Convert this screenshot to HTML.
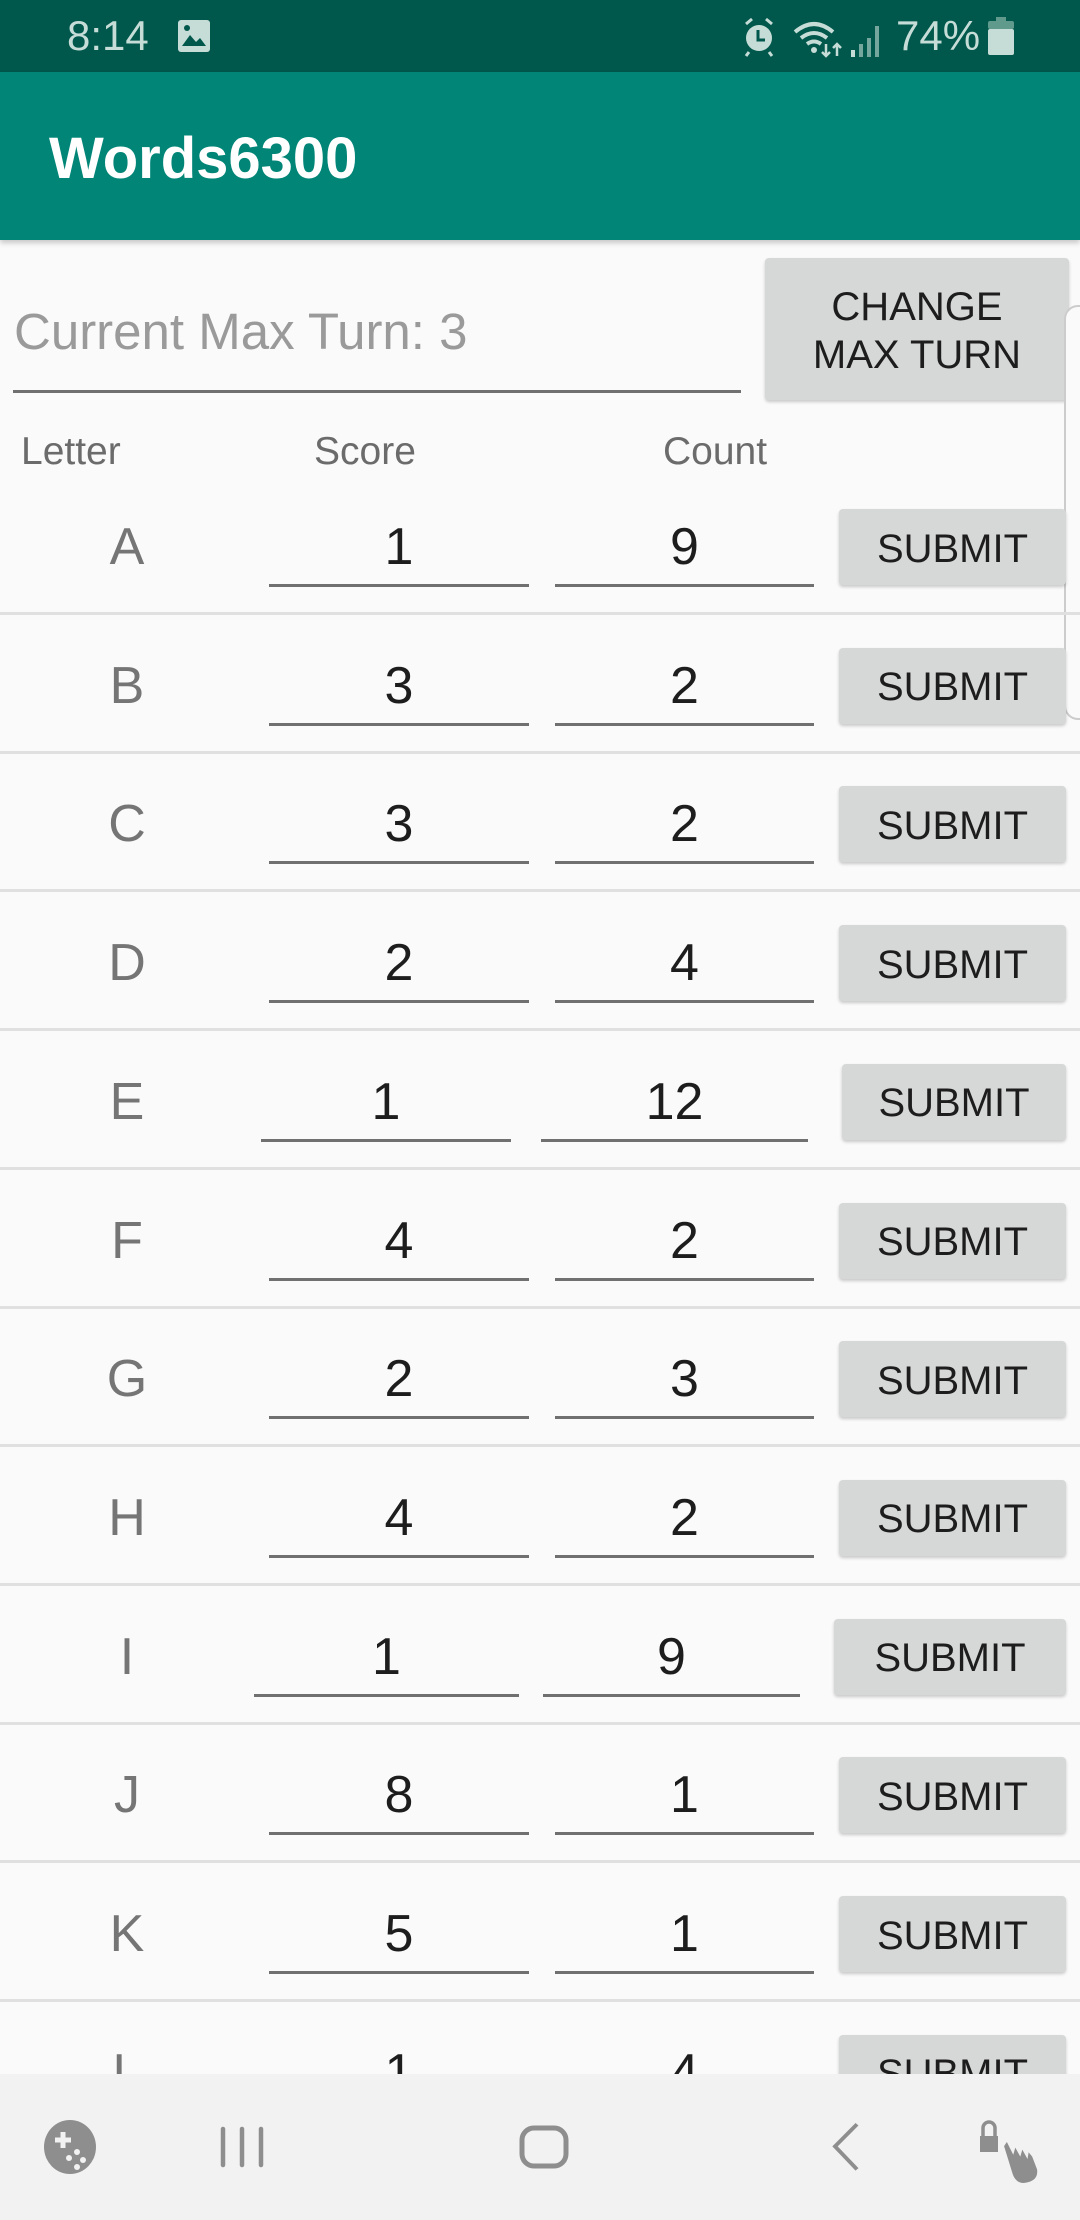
<!DOCTYPE html>
<html><head><meta charset="utf-8"><style>
*{margin:0;padding:0;box-sizing:border-box}
body{width:1080px;height:2220px;overflow:hidden;background:#fafafa;font-family:"Liberation Sans",Arial,sans-serif;position:relative}
.a{position:absolute}
.sb{left:0;top:0;width:1080px;height:72px;background:#00574b}
.ab{left:0;top:72px;width:1080px;height:168px;background:#008577;box-shadow:0 3px 5px rgba(0,0,0,.2)}
.btn{background:#d6d7d7;border-radius:4px;box-shadow:0 2px 3px rgba(0,0,0,.2);color:#1d1d1d;text-align:center;font-size:40px;display:flex;align-items:center;justify-content:center}
.ul{height:3px;background:#707070}
.num{font-size:52px;color:#1d1d1d;text-align:center}
.let{font-size:52px;color:#757575;text-align:center;width:120px}
.sep{left:0;width:1080px;height:3px;background:#e0e0e0}
.hd{font-size:39px;color:#6b6b6b;top:430px}
</style></head><body>
<div class="a sb"></div>
<div class="a" style="left:67px;top:12px;font-size:42px;color:#c5dcd7">8:14</div>
<svg class="a" style="left:176px;top:18px" width="36" height="36" viewBox="0 0 36 36"><rect x="2" y="2" width="32" height="32" rx="3" fill="#c5dcd7"/><path d="M6 28 L14 17 L20 24 L24 20 L30 28Z" fill="#00574b"/><circle cx="11" cy="10" r="3" fill="#00574b"/></svg>
<svg class="a" style="left:738px;top:14px" width="280" height="44" viewBox="0 0 280 44">
<g fill="#c5dcd7" stroke="#c5dcd7">
<circle cx="21" cy="24" r="13" stroke="none"/><path d="M8 10 L14 5 M34 10 L28 5 M11 38 L8 42 M31 38 L34 42" stroke-width="3" fill="none"/>
<path d="M20 16 V26 H27" stroke="#00574b" stroke-width="3" fill="none"/>
<path d="M57 18 Q76 2 95 18 M63 24 Q76 14 89 24 M69 30 Q76 25 83 30" stroke-width="4" fill="none"/>
<circle cx="76" cy="36" r="3" stroke="none"/>
<path d="M88 30 V42 M84 38 L88 42 L92 38 M99 42 V30 M95 34 L99 30 L103 34" stroke-width="2.5" fill="none"/>
<rect x="113" y="36" width="4" height="7" stroke="none"/><rect x="121" y="30" width="4" height="13" stroke="none" opacity=".6"/><rect x="129" y="24" width="4" height="19" stroke="none" opacity=".6"/><rect x="137" y="12" width="4" height="31" stroke="none" opacity=".6"/>
</g></svg>
<div class="a" style="left:896px;top:12px;font-size:42px;color:#c5dcd7">74%</div>
<svg class="a" style="left:988px;top:17px" width="26" height="38" viewBox="0 0 26 38"><rect x="8" y="0" width="10" height="6" fill="#5f9a8d"/><rect x="0" y="4" width="26" height="8" rx="2" fill="#5f9a8d"/><rect x="0" y="12" width="26" height="26" rx="2" fill="#c5dcd7"/></svg>
<div class="a ab"></div>
<div class="a" style="left:49px;top:125px;font-size:58px;font-weight:bold;color:#fff">Words6300</div>

<div class="a" style="left:14px;top:302px;font-size:51px;color:#9a9a9a">Current Max Turn: 3</div>
<div class="a ul" style="left:13px;top:390px;width:728px"></div>
<div class="a btn" style="left:765px;top:258px;width:304px;height:142px;line-height:48px;padding-top:4px">CHANGE<br>MAX TURN</div>
<div class="a" style="left:1064px;top:305px;width:30px;height:415px;border:2px solid #ccc;border-radius:14px;background:#fafafa"></div>

<div class="a hd" style="left:21px">Letter</div>
<div class="a hd" style="left:314px">Score</div>
<div class="a hd" style="left:663px">Count</div>

<div id="rows"></div>
<script>
var L="ABCDEFGHIJKL",S=[1,3,3,2,1,4,2,4,1,8,5,1],C=[9,2,2,4,12,2,3,2,9,1,1,4];
var off={4:[-8,-18,-14,-6,3],8:[-15,-10,-12,-14,-5]};
var h="";
for(var i=0;i<12;i++){
 var c=546+i*138.7,o=off[i]||[0,0,0,0,0];
 var s1=269+o[0],s2=529+o[1],c1=555+o[2],c2=814+o[3],b1=839+o[4];
 h+='<div class="a let" style="left:67px;top:'+(c-29)+'px">'+L[i]+'</div>';
 h+='<div class="a num" style="left:'+s1+'px;width:'+(s2-s1)+'px;top:'+(c-29)+'px">'+S[i]+'</div>';
 h+='<div class="a ul" style="left:'+s1+'px;width:'+(s2-s1)+'px;top:'+(c+38)+'px"></div>';
 h+='<div class="a num" style="left:'+c1+'px;width:'+(c2-c1)+'px;top:'+(c-29)+'px">'+C[i]+'</div>';
 h+='<div class="a ul" style="left:'+c1+'px;width:'+(c2-c1)+'px;top:'+(c+38)+'px"></div>';
 h+='<div class="a btn" style="left:'+b1+'px;width:'+(1066-b1)+'px;top:'+(c-37)+'px;height:76px;padding-top:4px">SUBMIT</div>';
 h+='<div class="a sep" style="top:'+(c+66)+'px"></div>';
}
document.getElementById('rows').innerHTML=h;
</script>

<div class="a" style="left:0;top:2074px;width:1080px;height:146px;background:#f2f2f2"></div>
<svg class="a" style="left:0;top:2074px" width="1080" height="146" viewBox="0 0 1080 146">
<g fill="#8e8e8e" stroke="#8e8e8e">
<ellipse cx="70" cy="73" rx="26" ry="27" stroke="none"/>
<path d="M63 58 V74 M55 66 H71" stroke="#f2f2f2" stroke-width="5"/>
<circle cx="77" cy="78" r="3" fill="#f2f2f2" stroke="none"/><circle cx="69" cy="84" r="3" fill="#f2f2f2" stroke="none"/><circle cx="83" cy="86" r="3" fill="#f2f2f2" stroke="none"/><circle cx="77" cy="93" r="3" fill="#f2f2f2" stroke="none"/>
<path d="M223 55 V91 M242 55 V91 M261 55 V91" stroke-width="4.5" stroke-linecap="round"/>
<rect x="522" y="54" width="44" height="38" rx="12" fill="none" stroke-width="5"/>
<path d="M857 53 L835 77 L857 102" fill="none" stroke-width="4" transform="translate(0,-4) scale(1,0.92) translate(0,6)"/>
<rect x="980" y="62" width="18" height="16" stroke="none"/>
<path d="M983 63 V54 A6 6 0 0 1 995 54 V63" fill="none" stroke-width="3.5"/>
<path d="M1003 72 L1011 98 Q1014 110 1024 110 Q1040 108 1038 95 L1033 82 L1028 76 L1027 82 L1022 73 L1020 80 L1015 71 L1013 78 L1007 66Z" stroke="#f2f2f2" stroke-width="2"/>
</g></svg>
</body></html>
